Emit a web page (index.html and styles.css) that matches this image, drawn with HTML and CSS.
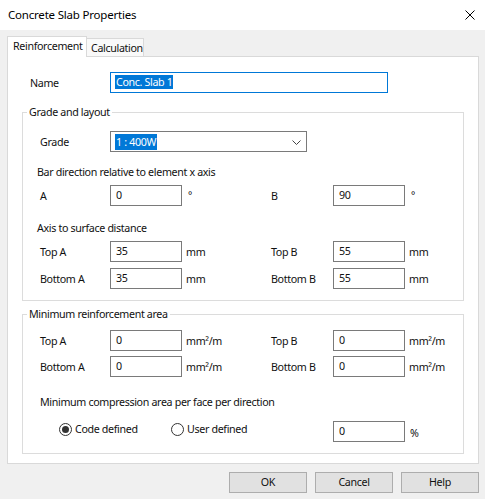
FILE: index.html
```html
<!DOCTYPE html>
<html>
<head>
<meta charset="utf-8">
<link rel="stylesheet" href="styles.css">
</head>
<body>
<div class="window">
  <div class="titlebar">
    <span class="title">Concrete Slab Properties</span>
    <span class="close"><svg width="10" height="10" viewBox="0 0 10 10"><path d="M0.5 0.5 L9.5 9.5 M9.5 0.5 L0.5 9.5" stroke="#000" stroke-width="1" fill="none"/></svg></span>
  </div>
  <div class="content">
    <div class="tabs">
      <div class="tab active">Reinforcement</div>
      <div class="tab">Calculation</div>
    </div>
    <div class="panel">
      <div class="name-row">
        <span class="lbl name-lbl">Name</span>
        <div class="input name-input focused"><span class="sel">Conc. Slab 1</span></div>
      </div>

      <div class="group g1">
        <div class="group-title">Grade and layout</div>
        <div class="grade-row">
          <span class="lbl">Grade</span>
          <div class="select"><span class="sel">1 : 400W</span>
            <svg class="chev" width="9" height="5" viewBox="0 0 9 5"><path d="M0.5 0.5 L4.5 4.5 L8.5 0.5" stroke="#444" stroke-width="1" fill="none"/></svg>
          </div>
        </div>
        <div class="subhead sh1">Bar direction relative to element x axis</div>
        <div class="grid row-a">
          <span class="lbl">A</span><div class="input">0</div><span class="unit deg">°</span>
          <span class="lbl">B</span><div class="input">90</div><span class="unit deg">°</span>
        </div>
        <div class="subhead sh2">Axis to surface distance</div>
        <div class="grid row-top">
          <span class="lbl">Top A</span><div class="input">35</div><span class="unit">mm</span>
          <span class="lbl">Top B</span><div class="input">55</div><span class="unit">mm</span>
        </div>
        <div class="grid row-bot">
          <span class="lbl">Bottom A</span><div class="input">35</div><span class="unit">mm</span>
          <span class="lbl">Bottom B</span><div class="input">55</div><span class="unit">mm</span>
        </div>
      </div>

      <div class="group g2">
        <div class="group-title">Minimum reinforcement area</div>
        <div class="grid row-top2">
          <span class="lbl">Top A</span><div class="input">0</div><span class="unit">mm²/m</span>
          <span class="lbl">Top B</span><div class="input">0</div><span class="unit">mm²/m</span>
        </div>
        <div class="grid row-bot2">
          <span class="lbl">Bottom A</span><div class="input">0</div><span class="unit">mm²/m</span>
          <span class="lbl">Bottom B</span><div class="input">0</div><span class="unit">mm²/m</span>
        </div>
        <div class="subhead sh3">Minimum compression area per face per direction</div>
        <div class="radio-row">
          <label class="radio r1"><span class="dot checked"></span>Code defined</label>
          <label class="radio r2"><span class="dot"></span>User defined</label>
          <div class="input pct-input">0</div><span class="unit pct">%</span>
        </div>
      </div>
    </div>
    <div class="buttons">
      <div class="btn">OK</div>
      <div class="btn">Cancel</div>
      <div class="btn">Help</div>
    </div>
  </div>
</div>
</body>
</html>
```
FILE: styles.css
```css
* { box-sizing: border-box; }
html, body { margin: 0; padding: 0; }
body {
  width: 485px;
  height: 499px;
  background: #f0f0f0;
  font-family: "Noto Sans", "Open Sans", sans-serif;
  font-size: 10.7px;
  letter-spacing: -0.35px;
  color: #111;
  overflow: hidden;
}
.window { width: 485px; height: 499px; }
.titlebar {
  height: 30px;
  background: #fff;
  display: flex;
  align-items: center;
  justify-content: space-between;
  padding: 0 10px 0 8px;
}
.title { font-size: 11.5px; letter-spacing: -0.2px; line-height: 16px; color: #000; }
.close { display: flex; width: 10px; height: 10px; margin-top: -1px; }
.content { padding: 6px 6px 0 7px; }
.tabs { display: flex; align-items: flex-end; height: 20px; position: relative; z-index: 1; }
.tab {
  height: 18px;
  line-height: 16px;
  padding: 0 3px;
  border: 1px solid #d9d9d9;
  border-bottom: none;
  background: #f9f9f9;
  white-space: nowrap;
}
.tab.active {
  height: 21px;
  background: #fff;
  padding: 1px 0 0 5px;
  margin-bottom: -1px;
  width: 80px;
}
.tab:not(.active) { width: 58px; margin-left: -1px; padding-top: 1px; padding-left: 4px; }
.panel {
  width: 472px;
  height: 408px;
  background: #fff;
  border: 1px solid #d9d9d9;
  padding: 15px 0 0 0;
}
.lbl { line-height: 16px; }
.input {
  height: 21px;
  width: 72px;
  border: 1px solid #7a7a7a;
  background: #fff;
  padding: 1px 0 0 5px;
  line-height: 16px;
}
.sel { background: #0078d7; color: #fff; padding: 0 1px; }
.name-row { display: flex; align-items: center; padding-left: 22px; }
.name-lbl { width: 80px; }
.name-input { width: 278px; border-color: #0078d7; padding-left: 4px; }
.group {
  margin-left: 14px;
  width: 442px;
  border: 1px solid #dcdcdc;
  padding-bottom: 11px;
}
.group-title {
  margin: -9px 0 0 4px;
  padding: 0 2px;
  background: #fff;
  width: max-content;
  line-height: 16px;
}
.g1 { margin-top: 19px; }
.g2 { margin-top: 13px; }
.grade-row { display: flex; align-items: center; padding-left: 17px; margin-top: 11px; }
.grade-row .lbl { width: 70px; }
.select {
  width: 197px;
  height: 21px;
  border: 1px solid #7a7a7a;
  display: flex;
  align-items: center;
  justify-content: space-between;
  padding: 0 5px 0 4px;
  line-height: 16px;
}
.chev { margin-top: 1px; }
.subhead { padding-left: 14px; line-height: 16px; }
.sh1 { margin-top: 12px; }
.sh2 { margin-top: 14px; }
.sh3 { margin-top: 17px; padding-left: 17px; }
.grid {
  display: grid;
  grid-template-columns: 70px 72px 89px 62px 72px 1fr;
  align-items: center;
  padding-left: 17px;
}
.unit { padding-left: 4px; line-height: 16px; }
.unit.deg { padding-left: 6px; margin-top: -2px; font-size: 10px; }
.row-a { margin-top: 5px; }
.row-top { margin-top: 5px; }
.row-bot { margin-top: 6px; }
.row-top2 { margin-top: 8px; }
.row-bot2 { margin-top: 5px; }
.radio-row {
  display: flex;
  align-items: flex-start;
  margin-top: 11px;
  padding-left: 36px;
}
.radio { display: flex; align-items: center; line-height: 16px; margin-top: 0px; }
.r1 { width: 112px; }
.r2 { width: 162px; }
.dot {
  width: 13px;
  height: 13px;
  border: 1px solid #333;
  border-radius: 50%;
  margin-right: 3px;
  display: flex;
  align-items: center;
  justify-content: center;
}
.dot.checked::after {
  content: "";
  width: 7px;
  height: 7px;
  border-radius: 50%;
  background: #333;
}
.pct { margin-top: 4px; padding-left: 5px; }
.buttons {
  display: flex;
  justify-content: flex-end;
  gap: 8px;
  margin-top: 8px;
}
.btn {
  width: 78px;
  height: 21px;
  background: #e1e1e1;
  border: 1px solid #adadad;
  text-align: center;
  line-height: 19px;
}
```
